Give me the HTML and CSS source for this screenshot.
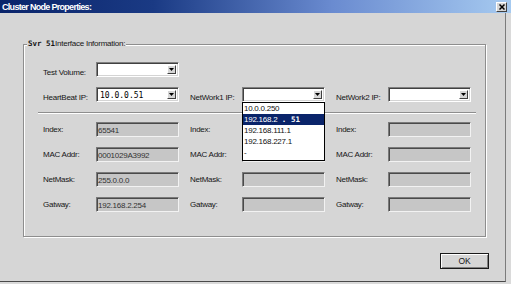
FILE: index.html
```html
<!DOCTYPE html>
<html>
<head>
<meta charset="utf-8">
<title>Cluster Node Properties</title>
<link rel="stylesheet" href="styles.css">
</head>
<body>
<div class="titlebar">
  <span class="title">Cluster Node Properties:</span>
  <span class="close"><svg width="6" height="6" viewBox="0 0 6 6"><path d="M0.5 0.5L5.5 5.5M5.5 0.5L0.5 5.5" stroke="#000" stroke-width="1.5"/></svg></span>
</div>
<div class="client">
  <div class="group">
    <span class="legend"><span class="mono">Svr 51</span>Interface Information:</span>
    <div class="grid top">
      <div class="lbl">Test Volume:</div>
      <div class="combo"><span class="val"></span><span class="btn"><svg width="5" height="3" viewBox="0 0 5 3"><path d="M0 0H5L2.5 3Z" fill="#000"/></svg></span></div>

      <div class="lbl first">HeartBeat IP:</div>
      <div class="combo"><span class="val">10.0.0.51</span><span class="btn"><svg width="5" height="3" viewBox="0 0 5 3"><path d="M0 0H5L2.5 3Z" fill="#000"/></svg></span></div>
      <div class="lbl pad">NetWork1 IP:</div>
      <div class="combo"><span class="val"></span><span class="btn"><svg width="5" height="3" viewBox="0 0 5 3"><path d="M0 0H5L2.5 3Z" fill="#000"/></svg></span>
        <div class="dropdown">
          <div class="item">10.0.0.250</div>
          <div class="item sel">192.168.2<span class="mono">&nbsp;.&nbsp;51</span></div>
          <div class="item">192.168.111.1</div>
          <div class="item">192.168.227.1</div>
          <div class="item">-</div>
        </div>
      </div>
      <div class="lbl pad">NetWork2 IP:</div>
      <div class="combo"><span class="val"></span><span class="btn"><svg width="5" height="3" viewBox="0 0 5 3"><path d="M0 0H5L2.5 3Z" fill="#000"/></svg></span></div>
    </div>
    <div class="sep"></div>
    <div class="grid bottom">
      <div class="lbl">Index:</div><div class="field">65541</div>
      <div class="lbl pad">Index:</div><div class="field"></div>
      <div class="lbl pad">Index:</div><div class="field"></div>

      <div class="lbl">MAC Addr:</div><div class="field">0001029A3992</div>
      <div class="lbl pad">MAC Addr:</div><div class="field"></div>
      <div class="lbl pad">MAC Addr:</div><div class="field"></div>

      <div class="lbl">NetMask:</div><div class="field">255.0.0.0</div>
      <div class="lbl pad">NetMask:</div><div class="field"></div>
      <div class="lbl pad">NetMask:</div><div class="field"></div>

      <div class="lbl">Gatway:</div><div class="field">192.168.2.254</div>
      <div class="lbl pad">Gatway:</div><div class="field"></div>
      <div class="lbl pad">Gatway:</div><div class="field"></div>
    </div>
  </div>
  <div class="footer">
    <div class="ok">OK</div>
  </div>
</div>
</body>
</html>
```

FILE: styles.css
```css
* { box-sizing: border-box; }

body {
  margin: 0;
  width: 511px;
  height: 284px;
  overflow: hidden;
  background: #dadada;
  font-family: "Liberation Sans", Arial, sans-serif;
  font-size: 8px;
  letter-spacing: -0.25px;
  color: #151515;
}

.titlebar {
  height: 13px;
  display: flex;
  align-items: center;
  justify-content: space-between;
  padding: 0 4px 0 2px;
  background: linear-gradient(90deg, #0a246a 0%, #1a3a84 30%, #6a8bd0 65%, #a6caf0 100%);
}

.title {
  color: #fff;
  font-weight: bold;
  font-size: 9px;
  letter-spacing: -0.7px;
}

.close {
  width: 11px;
  height: 10px;
  background: #d6d6d6;
  border: 1px solid;
  border-color: #fff #404040 #404040 #fff;
  display: flex;
  align-items: center;
  justify-content: center;
}

.client {
  width: 506px;
  height: 269px;
  background: #d6d6d6;
  border-right: 1px solid #7c7c7c;
  border-bottom: 1px solid #4a4a4a;
  padding: 31px 0 0 23px;
  display: flex;
  flex-direction: column;
}

.group {
  position: relative;
  width: 463px;
  height: 193px;
  border: 1px solid #8e8e8e;
  box-shadow: inset 1px 1px #fff, 1px 1px #fff;
  padding: 17px 0 0 19px;
}

.legend {
  position: absolute;
  left: 3px;
  top: -6px;
  padding: 0 1px;
  line-height: 10px;
  background: #d6d6d6;
  white-space: nowrap;
}

.mono {
  font-family: "DejaVu Sans Mono", "Liberation Mono", monospace;
  font-size: 7.5px;
  font-weight: bold;
  letter-spacing: 0;
}

.grid {
  display: grid;
  grid-template-columns: 53px 83px 63px 83px 63px 83px;
  grid-auto-rows: 15px;
  row-gap: 10px;
}

.lbl {
  line-height: 16px;
  white-space: nowrap;
}

.top .lbl { line-height: 21px; }

.lbl.first { grid-column: 1; }

.lbl.pad { padding-left: 11px; }

.combo {
  position: relative;
  display: flex;
  padding: 2px;
  background: #fff;
  border: 1px solid;
  border-color: #808080 #fff #fff #808080;
  box-shadow: inset 1px 1px #404040, inset -1px -1px #d4d4d4;
}

.combo .val {
  flex: 1;
  padding-left: 1px;
  font-family: "DejaVu Sans Mono", "Liberation Mono", monospace;
  font-size: 8px;
  letter-spacing: 0;
  line-height: 11px;
  color: #000;
}

.btn {
  width: 9px;
  background: #d6d6d6;
  border: 1px solid;
  border-color: #fff #404040 #404040 #fff;
  display: flex;
  align-items: center;
  justify-content: center;
}

.dropdown {
  position: absolute;
  top: calc(100% + 1px);
  left: -1px;
  width: 83px;
  padding-bottom: 2px;
  background: #fff;
  border: 1px solid #000;
  z-index: 2;
}

.item {
  height: 11px;
  line-height: 11px;
  padding-left: 1px;
  color: #111;
  white-space: nowrap;
}

.item.sel {
  background: #0a246a;
  color: #fff;
}

.sep {
  width: 438px;
  margin: 10px 0 8px -5px;
  border-top: 1px solid #8e8e8e;
  border-bottom: 1px solid #fff;
}

.field {
  background: #c6c6c6;
  border: 1px solid;
  border-color: #7a7a7a #f2f2f2 #f2f2f2 #7a7a7a;
  box-shadow: inset 1px 1px #4a4a4a;
  padding: 1px 0 0 1px;
  line-height: 13px;
  color: #333;
}

.footer {
  display: flex;
  justify-content: flex-end;
  padding-right: 16px;
  margin-top: 16px;
}

.ok {
  width: 49px;
  height: 16px;
  border: 1px solid #1a1a1a;
  box-shadow: inset 1px 1px #fff, inset -1px -1px #808080;
  display: flex;
  align-items: center;
  justify-content: center;
  font-size: 8.5px;
  background: #d6d6d6;
}
```
